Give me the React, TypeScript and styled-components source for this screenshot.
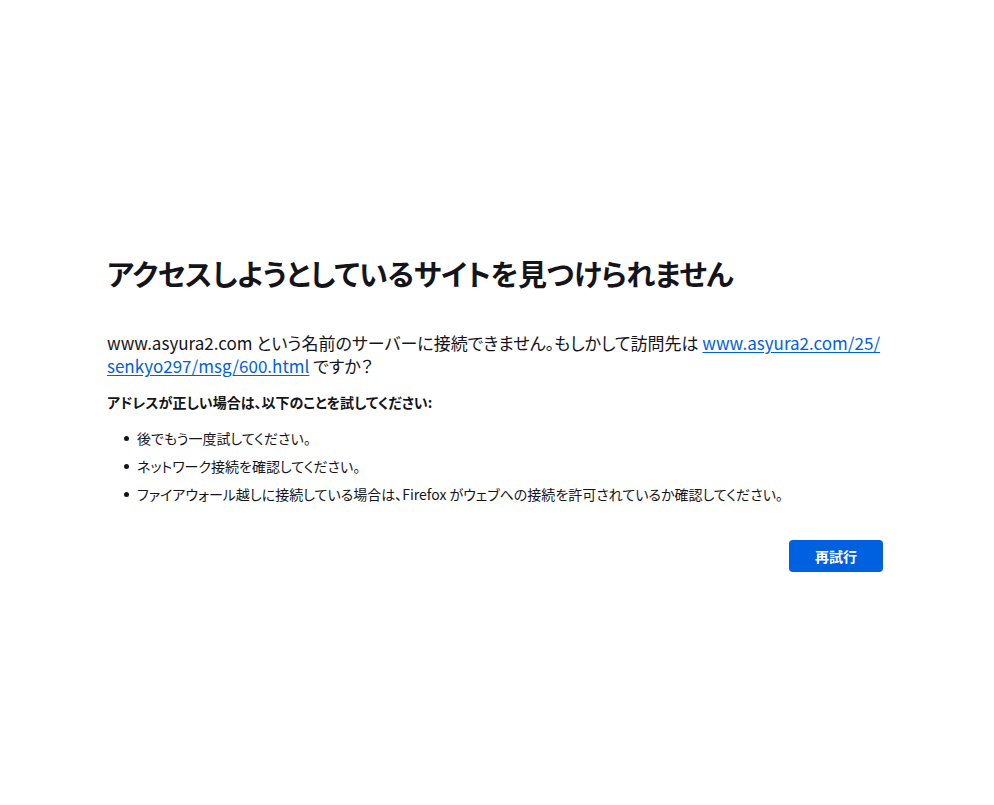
import styled, { createGlobalStyle } from "styled-components";

const GlobalStyle = createGlobalStyle`
  html, body {
    margin: 0;
    padding: 0;
    background: #ffffff;
  }
  body {
    font-family: "Noto Sans CJK JP", "Noto Sans", sans-serif;
    font-feature-settings: "palt";
    color: #15141a;
  }
`;

const Page = styled.div`
  box-sizing: border-box;
  width: 994px;
  height: 805px;
  padding: 251px 0 0 107px;
`;

const Container = styled.div`
  width: 776px;
  display: flex;
  flex-direction: column;
`;

const Title = styled.h1`
  margin: 0;
  font-size: 29px;
  line-height: 44px;
  font-weight: 700;
  letter-spacing: -0.4px;
`;

const Description = styled.p`
  margin: 36px 0 0;
  font-size: 17px;
  line-height: 23px;
`;

const Link = styled.a`
  color: #0061e0;
  text-decoration: underline;
  text-underline-offset: 2px;
`;

const Subtitle = styled.p`
  margin: 15px 0 0;
  font-size: 14px;
  line-height: 20px;
  font-weight: 700;
`;

const List = styled.ul`
  margin: 16px 0 0;
  padding: 0 0 0 17px;
  list-style: none;
  display: flex;
  flex-direction: column;
  gap: 8px;
`;

const Item = styled.li`
  display: flex;
  align-items: center;
  gap: 8px;
  font-size: 14px;
  line-height: 20px;

  &::before {
    content: "";
    flex: none;
    width: 5px;
    height: 5px;
    border-radius: 50%;
    background: #15141a;
  }
`;

const ButtonRow = styled.div`
  display: flex;
  justify-content: flex-end;
  margin-top: 36px;
`;

const RetryButton = styled.button`
  width: 94px;
  height: 32px;
  border: none;
  border-radius: 4px;
  background: #0061e0;
  color: #ffffff;
  font-family: inherit;
  font-feature-settings: "palt";
  font-size: 14px;
  font-weight: 700;
  cursor: pointer;
`;

export default function App() {
  return (
    <>
      <GlobalStyle />
      <Page>
        <Container>
          <Title>アクセスしようとしているサイトを見つけられません</Title>
          <Description>
            www.asyura2.com という名前のサーバーに接続できません。もしかして訪問先は{" "}
            <Link href="#">
              www.asyura2.com/25/<wbr />senkyo297/msg/600.html
            </Link>{" "}
            ですか？
          </Description>
          <Subtitle>アドレスが正しい場合は、以下のことを試してください:</Subtitle>
          <List>
            <Item>後でもう一度試してください。</Item>
            <Item>ネットワーク接続を確認してください。</Item>
            <Item>
              ファイアウォール越しに接続している場合は、Firefox がウェブへの接続を許可されているか確認してください。
            </Item>
          </List>
          <ButtonRow>
            <RetryButton>再試行</RetryButton>
          </ButtonRow>
        </Container>
      </Page>
    </>
  );
}
